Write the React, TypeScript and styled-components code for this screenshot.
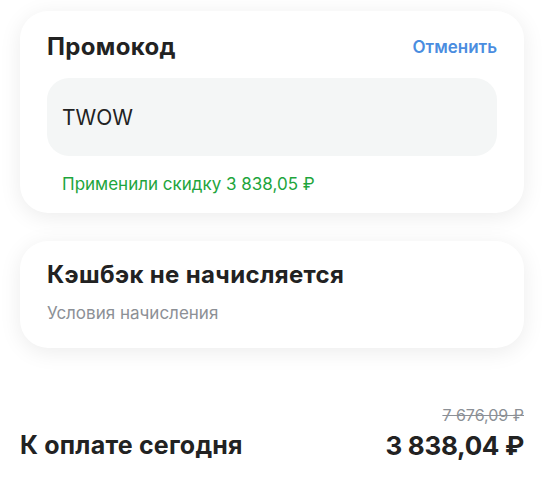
import React from "react";
import styled, { createGlobalStyle } from "styled-components";

const GlobalStyle = createGlobalStyle`
  html, body {
    margin: 0;
    padding: 0;
    background: #ffffff;
  }
  body {
    font-family: Inter, "Liberation Sans", Arial, sans-serif;
    color: #222222;
    -webkit-font-smoothing: antialiased;
  }
`;

const Page = styled.div`
  width: 545px;
  padding: 11px 21px 0 20px;
  box-sizing: border-box;
  display: flex;
  flex-direction: column;
`;

const Card = styled.section`
  background: #ffffff;
  border-radius: 28px;
  box-shadow: 0 4px 22px rgba(0, 0, 0, 0.08);
  padding: 22px 27px 19px;
  display: flex;
  flex-direction: column;
  margin-bottom: 28px;
`;

const HeaderRow = styled.div`
  display: flex;
  justify-content: space-between;
  align-items: center;
  height: 28px;
`;

const Title = styled.h2`
  margin: 0;
  font-size: 24px;
  line-height: 28px;
  font-weight: 700;
  letter-spacing: 0.35px;
  color: #222222;
`;

const LinkButton = styled.button`
  border: none;
  background: none;
  padding: 0;
  font-family: inherit;
  font-size: 17px;
  font-weight: 600;
  color: #4a8de0;
  cursor: pointer;
`;

const CodeField = styled.div`
  margin-top: 17px;
  height: 78px;
  border-radius: 22px;
  background: #f4f6f6;
  display: flex;
  align-items: center;
  padding: 0 15px;
  font-size: 21px;
  color: #222222;
`;

const Success = styled.div`
  margin-top: 18px;
  padding-left: 15px;
  font-size: 17px;
  line-height: 20px;
  color: #1ea53c;
`;

const Subtitle = styled.div`
  margin-top: 14px;
  font-size: 17px;
  line-height: 20px;
  color: #8c9096;
`;

const Totals = styled.div`
  margin-top: 29px;
  display: flex;
  flex-direction: column;
`;

const OldPrice = styled.div`
  align-self: flex-end;
  font-size: 16px;
  line-height: 20px;
  color: #8c9096;
  text-decoration: line-through;
`;

const TotalRow = styled.div`
  display: flex;
  justify-content: space-between;
  align-items: center;
  height: 40px;
`;

const TotalLabel = styled.div`
  font-size: 25px;
  font-weight: 700;
  letter-spacing: 0.2px;
  color: #222222;
`;

const TotalValue = styled.div`
  font-size: 26px;
  font-weight: 700;
  letter-spacing: -0.3px;
  color: #222222;
`;

const CashbackCard = styled(Card)`
  padding: 20px 27px 25px;
`;

export default function App() {
  return (
    <>
      <GlobalStyle />
      <Page>
        <Card>
          <HeaderRow>
            <Title>Промокод</Title>
            <LinkButton>Отменить</LinkButton>
          </HeaderRow>
          <CodeField>TWOW</CodeField>
          <Success>Применили скидку 3 838,05 ₽</Success>
        </Card>
        <CashbackCard>
          <Title>Кэшбэк не начисляется</Title>
          <Subtitle>Условия начисления</Subtitle>
        </CashbackCard>
        <Totals>
          <OldPrice>7 676,09 ₽</OldPrice>
          <TotalRow>
            <TotalLabel>К оплате сегодня</TotalLabel>
            <TotalValue>3 838,04 ₽</TotalValue>
          </TotalRow>
        </Totals>
      </Page>
    </>
  );
}
